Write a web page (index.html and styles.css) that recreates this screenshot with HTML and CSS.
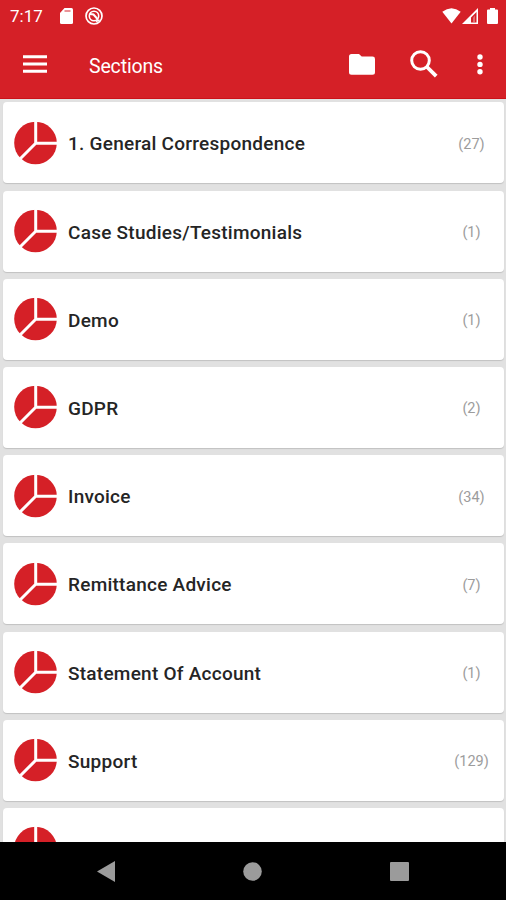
FILE: index.html
```html
<!DOCTYPE html>
<html lang="en">
<head>
  <meta charset="UTF-8">
  <meta name="viewport" content="width=device-width, initial-scale=1.0">
  <title>Sections</title>
  <link rel="stylesheet" href="styles.css">
</head>
<body>
  <!-- Shared pie icon -->
  <svg class="sprite" width="0" height="0">
    <symbol id="pie" viewBox="0 0 44 44">
      <circle cx="22.5" cy="22" r="21.3" fill="#d52027"/>
      <path d="M22.7 0V22.3H44M22.7 22.3L7 38" fill="none" stroke="#fff" stroke-width="3"/>
    </symbol>
  </svg>

  <!-- Status Bar -->
  <div class="status-bar">
    <span class="clock">7:17</span>
    <svg class="sd-icon" width="13" height="16" viewBox="0 0 13 16">
      <path d="M4.5 0H11.5Q13 0 13 1.5V14.5Q13 16 11.5 16H1.5Q0 16 0 14.5V5Z" fill="#fff"/>
      <path d="M4.5 3H10.5" stroke="#d52027" stroke-width="1.6" opacity=".6"/>
    </svg>
    <svg class="sync-icon" width="18" height="18" viewBox="0 0 18 18" fill="none" stroke="#fff">
      <circle cx="9" cy="9" r="8" stroke-width="1.7"/>
      <circle cx="9" cy="9" r="4.7" stroke-width="1.6"/>
      <path d="M5 7L8.5 7.5L12.5 12" stroke-width="2"/>
      <path d="M11 14.5L14.5 13" stroke-width="1.5"/>
    </svg>
    <div class="status-right">
      <svg width="19" height="16" viewBox="0 0 19 16"><path d="M0.3 3.7Q9.5 -3.3 18.7 3.7L9.5 15.6Z" fill="#fff"/></svg>
      <svg width="17" height="16" viewBox="0 0 17 16"><path fill-rule="evenodd" d="M0 16L16 0V16ZM9 14.5H14.5V4L9 9.5Z" fill="#fff"/><path d="M11 14V9.5L13 7.5V14Z" fill="#fff" opacity=".35"/></svg>
      <svg class="battery" width="11" height="16" viewBox="0 0 11 16"><path d="M3 0H8V1.6H10Q11 1.6 11 2.6V15Q11 16 10 16H1Q0 16 0 15V2.6Q0 1.6 1 1.6H3Z" fill="#fff"/></svg>
    </div>
  </div>

  <!-- App Bar -->
  <header class="app-bar">
    <svg class="menu-icon" width="24" height="18" viewBox="0 0 24 18"><path d="M0 1.7H24M0 9H24M0 16.3H24" stroke="#fff" stroke-width="3"/></svg>
    <h1>Sections</h1>
    <svg class="folder-icon" width="26" height="21" viewBox="0 0 26 21"><path d="M2.5 0H10L12.7 2.6H23.5Q26 2.6 26 5V18.3Q26 20.8 23.5 20.8H2.5Q0 20.8 0 18.3V2.5Q0 0 2.5 0Z" fill="#fff"/></svg>
    <svg class="search-icon" width="28" height="28" viewBox="0 0 28 28" fill="none" stroke="#fff"><circle cx="10.5" cy="10.5" r="8.8" stroke-width="3"/><path d="M16.5 16.5L26.2 26.2" stroke-width="3.8"/></svg>
    <svg class="more-icon" width="6" height="21" viewBox="0 0 6 21" fill="#fff"><circle cx="3" cy="3" r="2.7"/><circle cx="3" cy="10.4" r="2.7"/><circle cx="3" cy="17.8" r="2.7"/></svg>
  </header>

  <!-- Section List -->
  <main class="sections">
    <div class="card"><svg class="pie"><use href="#pie"/></svg><span class="name">1. General Correspondence</span><span class="count">(27)</span></div>
    <div class="card"><svg class="pie"><use href="#pie"/></svg><span class="name">Case Studies/Testimonials</span><span class="count">(1)</span></div>
    <div class="card"><svg class="pie"><use href="#pie"/></svg><span class="name">Demo</span><span class="count">(1)</span></div>
    <div class="card"><svg class="pie"><use href="#pie"/></svg><span class="name">GDPR</span><span class="count">(2)</span></div>
    <div class="card"><svg class="pie"><use href="#pie"/></svg><span class="name">Invoice</span><span class="count">(34)</span></div>
    <div class="card"><svg class="pie"><use href="#pie"/></svg><span class="name">Remittance Advice</span><span class="count">(7)</span></div>
    <div class="card"><svg class="pie"><use href="#pie"/></svg><span class="name">Statement Of Account</span><span class="count">(1)</span></div>
    <div class="card"><svg class="pie"><use href="#pie"/></svg><span class="name">Support</span><span class="count">(129)</span></div>
    <div class="card"><svg class="pie"><use href="#pie"/></svg></div>
  </main>

  <!-- Navigation Bar -->
  <nav class="nav-bar">
    <svg width="18" height="21" viewBox="0 0 18 21"><path d="M0 10.5L18 0V21Z" fill="#9b9b9b"/></svg>
    <svg width="19" height="19" viewBox="0 0 19 19"><circle cx="9.5" cy="9.5" r="9.3" fill="#9b9b9b"/></svg>
    <svg width="19" height="19" viewBox="0 0 19 19"><rect width="19" height="19" rx="1" fill="#9b9b9b"/></svg>
  </nav>
</body>
</html>
```
FILE: styles.css
```css
/* General Styles */
:root {
  --red: #d52027;
  --page-bg: #e1e1e1;
  --card-bg: #ffffff;
  --text: #252525;
  --muted: #9c9c9c;
}

* {
  box-sizing: border-box;
}

body {
  font-family: Roboto, sans-serif;
  background: var(--page-bg);
  color: var(--text);
  margin: 0;
  height: 900px;
  display: flex;
  flex-direction: column;
  overflow: hidden;
}

svg {
  display: block;
  flex: none;
}

.sprite {
  position: absolute;
}

/* Status Bar */
.status-bar {
  display: flex;
  align-items: center;
  height: 31px;
  flex: none;
  padding: 0 8px 0 10px;
  background: var(--red);
  color: #fff;
}

.clock {
  width: 50px;
  font-size: 17px;
}

.sync-icon {
  margin-left: 12px;
}

.status-right {
  display: flex;
  margin-left: auto;
  gap: 1px;
}

.battery {
  margin-left: 7px;
}

/* App Bar */
.app-bar {
  display: flex;
  align-items: center;
  height: 68px;
  flex: none;
  padding: 0 23px 1px;
  background: var(--red);
  border-bottom: 1px solid #cb1219;
  color: #fff;
}

.app-bar h1 {
  margin: 4px auto 0 42px;
  font-size: 19.5px;
  font-weight: 400;
  letter-spacing: -0.15px;
}

.search-icon {
  margin: 0 39px 0 35px;
}

/* Section List */
.sections {
  flex: 1;
  min-height: 0;
  overflow: hidden;
  display: flex;
  flex-direction: column;
  gap: 7.2px;
  padding: 3.4px 2px 0 3px;
}

.card {
  display: flex;
  align-items: center;
  height: 81px;
  flex: none;
  padding: 0 0 0 10px;
  background: var(--card-bg);
  border-radius: 4px;
  box-shadow: 0 1px 1px rgba(0, 0, 0, 0.14);
}

.pie {
  width: 44px;
  height: 44px;
}

.name {
  flex: 1;
  margin: 2px 0 0 11px;
  font-size: 19px;
  font-weight: 500;
  letter-spacing: 0.25px;
}

.count {
  width: 65px;
  margin-top: 3px;
  text-align: center;
  font-size: 14.5px;
  color: var(--muted);
}

/* Navigation Bar */
.nav-bar {
  display: flex;
  align-items: center;
  justify-content: space-between;
  height: 58px;
  flex: none;
  padding: 0 97px;
  background: #000;
}
```
